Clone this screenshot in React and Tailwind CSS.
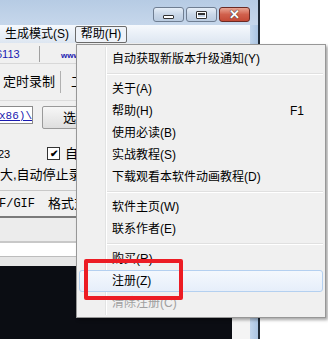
const CJK = "font-['Liberation_Sans','Noto_Sans_CJK_SC',sans-serif]";

const WinButton = ({ red, children }) => (
  <div
    className={
      "flex h-[15px] w-[31px] items-center justify-center rounded-[3px] border " +
      (red
        ? "border-[#6b2a24] bg-gradient-to-b from-[#e8a493] via-[#d0604c] to-[#c44a36]"
        : "border-[#6f7e92] bg-gradient-to-b from-[#e6eef8] via-[#c9d7e8] to-[#b9cbe0]")
    }
  >
    {children}
  </div>
);

const Item = ({ label, right, disabled, active }) => (
  <div
    className={
      "mx-[2px] flex h-[22px] items-center pl-[32px] pr-[18px] text-[12px] " +
      (active
        ? "rounded-[3px] border border-[#b4d0f0] bg-gradient-to-b from-[#f4f8fd] to-[#e6eefa] "
        : "border border-transparent ") +
      (disabled ? "text-[#a0a0a0]" : "text-black")
    }
  >
    <span className="flex-1">{label}</span>
    {right && <span>{right}</span>}
  </div>
);

const Sep = () => (
  <div className="flex h-[8px] flex-col justify-center pl-[30px] pr-[2px]">
    <div className="h-px bg-[#e0e0e0]" />
    <div className="h-px bg-white" />
  </div>
);

export default function App() {
  return (
    <div className={"relative flex h-[339px] w-[328px] overflow-hidden bg-white " + CJK}>
      {/* app window */}
      <div className="flex h-full w-[260px] flex-col border-r-2 border-[#1f2a36]">
        <div className="flex h-[25px] shrink-0 items-start justify-end gap-[2px] bg-gradient-to-b from-[#b6cbe4] to-[#c6d7eb] pr-[8px] pt-[7px]">
          <WinButton>
            <div className="mt-[4px] h-[4px] w-[11px] rounded-[1px] border border-[#333] bg-white" />
          </WinButton>
          <WinButton>
            <div className="h-[8px] w-[11px] rounded-[1px] border border-[#333] bg-white p-[1px]">
              <div className="h-full w-full border-t-2 border-[#333] bg-[#c9d7e8]" />
            </div>
          </WinButton>
          <WinButton red>
            <span className="text-[13px] font-bold leading-none text-white [text-shadow:0_0_1px_#333,0_0_1px_#333]">
              ✕
            </span>
          </WinButton>
        </div>

        <div className="flex min-h-0 flex-1">
          <div className="flex w-[250px] flex-col bg-[#f0f0f0]">
            {/* menu bar */}
            <div className="flex h-[18px] items-center gap-[6px] bg-gradient-to-b from-[#f6f9fd] to-[#dde6f1] text-[12px] text-black">
              <span className="pl-[5px]">生成模式(S)</span>
              <span className="flex h-[17px] w-[52px] items-center justify-center rounded-[2px] border border-[#6b6b6b] bg-[#eef2f8]">
                帮助(H)
              </span>
            </div>

            {/* row: numbers */}
            <div className="flex h-[21px] items-end border-b border-[#d8d8d8] pb-[1px] text-[11px] text-[#1a1ab0]">
              <span className="w-[43px] -ml-[4px] font-['Liberation_Sans',sans-serif]">6113</span>
              <div className="h-[16px] w-px bg-[#a0a0a0]" />
              <span className="ml-[21px] text-[8px] font-bold">www</span>
            </div>

            {/* toolbar */}
            <div className="flex h-[36px] items-center text-[13px] text-black">
              <span className="w-[60px] pl-[3px]">定时录制</span>
              <div className="h-[22px] w-px bg-[#b0b0b0]" />
              <span className="ml-[10px]">工</span>
            </div>

            {/* path */}
            <div className="flex h-[42px] items-start gap-[9px] border-t border-[#dcdcdc] pt-[5px]">
              <div className="flex h-[18px] w-[33px] items-end overflow-hidden border border-l-0 border-[#8a8a8a] bg-white">
                <span className="-ml-[1px] font-['Liberation_Mono',monospace] text-[11px] leading-[14px] text-[#1a1ab0] underline">
                  x86)\
                </span>
              </div>
              <div className="flex h-[23px] w-[60px] items-center rounded-[2px] border border-[#9a9a9a] bg-gradient-to-b from-[#f7f7f7] to-[#dedede] pl-[20px] text-[13px]">
                选择
              </div>
            </div>

            {/* options */}
            <div className="flex h-[48px] flex-col justify-end pb-[6px] text-[13px] text-black">
              <div className="flex items-center">
                <span className="w-[49px] text-[11px] -ml-[2px] font-['Liberation_Sans',sans-serif]">23</span>
                <div className="flex h-[13px] w-[13px] items-center justify-center border border-[#333] bg-white text-[10px] font-bold leading-none">
                  ✔
                </div>
                <span className="ml-[5px]">自动</span>
              </div>
              <span className="mt-[1px] whitespace-nowrap">大,自动停止录制</span>
            </div>

            {/* format */}
            <div className="flex h-[28px] items-center gap-[13px] whitespace-nowrap border-t border-[#c8c8c8] border-b-2 border-b-[#7a7a7a] text-[13px] text-black">
              <span className="-ml-[1px] font-['Liberation_Mono',monospace] text-[12px]">F/GIF</span>
              <span>格式支持</span>
            </div>

            <div className="h-[25px] border-b-2 border-[#c8c8c8] bg-[#ececec]" />
            <div className="h-[14px] border-b border-[#bdbdbd] bg-white" />
            <div className="h-[9px] bg-[#e6e6e6]" />

            {/* capture area */}
            <div className="flex flex-1">
              <div className="w-[232px] bg-[#0b0d13]" />
              <div className="flex-1 bg-[#f4f4f4]" />
            </div>
          </div>
          <div className="w-[8px] bg-gradient-to-r from-[#c2d6ec] to-[#aac4e2]" />
        </div>
      </div>
      <div className="flex-1 bg-white" />

      {/* dropdown menu */}
      <div className="absolute left-[76px] top-[44px] w-[250px] border border-[#979797] bg-[#f0f0f0] py-[3px] shadow-[2px_2px_3px_rgba(0,0,0,0.35)]">
        <div className="absolute bottom-[2px] left-[28px] top-[2px] w-px bg-[#e2e3e3]" />
        <div className="absolute bottom-[2px] left-[29px] top-[2px] w-px bg-white" />
        <div className="relative">
          <Item label="自动获取新版本升级通知(Y)" />
          <Sep />
          <Item label="关于(A)" />
          <Item label="帮助(H)" right="F1" />
          <Item label="使用必读(B)" />
          <Item label="实战教程(S)" />
          <Item label="下载观看本软件动画教程(D)" />
          <Sep />
          <Item label="软件主页(W)" />
          <Item label="联系作者(E)" />
          <Sep />
          <Item label="购买(R)" />
          <Item label="注册(Z)" active />
          <Item label="清除注册(C)" disabled />
        </div>
      </div>

      {/* red highlight box */}
      <div className="absolute left-[84px] top-[259px] h-[41px] w-[99px] rounded-[2px] border-4 border-[#ec1c24]" />
    </div>
  );
}
